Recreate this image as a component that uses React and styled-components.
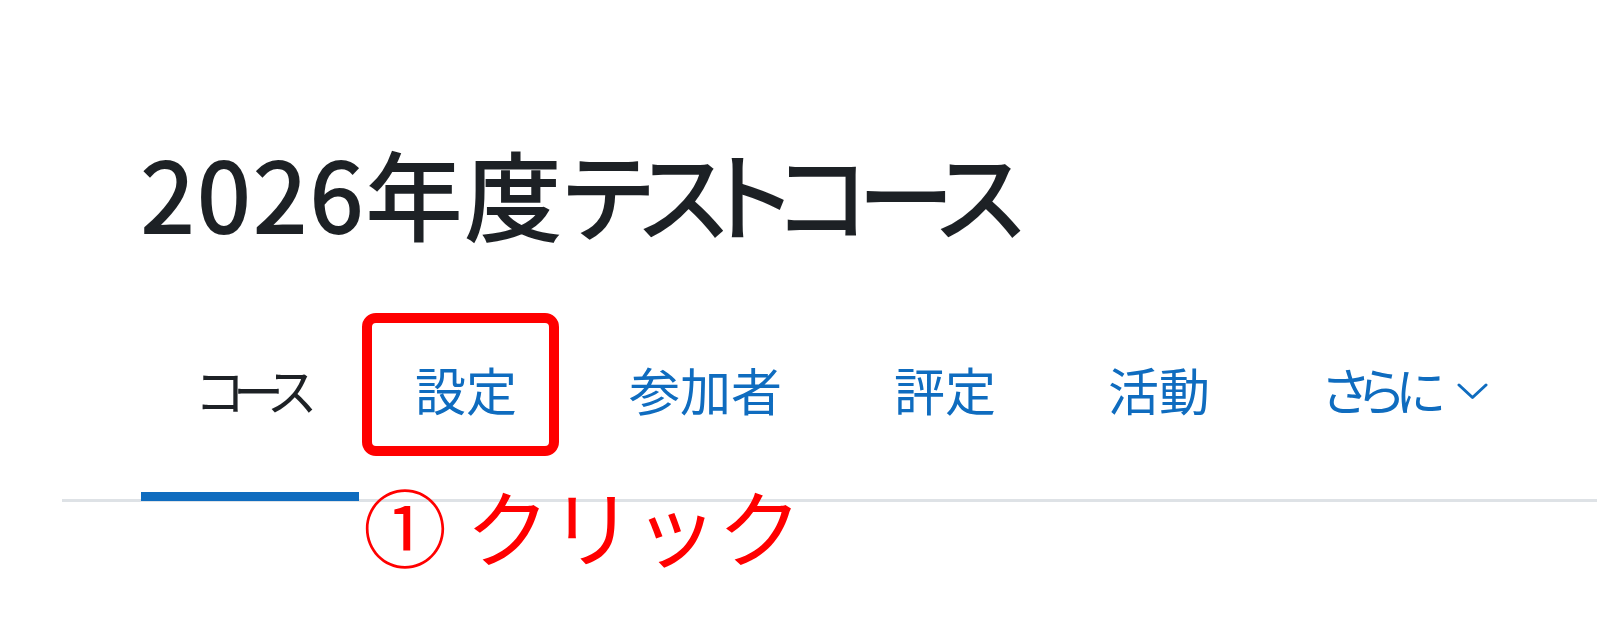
import React from "react"
import styled, { createGlobalStyle } from "styled-components"

// spacing: かなだけのラベルは字間を詰める
const tabs = [
  { label: "コース", active: true, spacing: -12 },
  { label: "設定", marked: true },
  { label: "参加者" },
  { label: "評定" },
  { label: "活動" },
  { label: "さらに", menu: true, spacing: -8 },
]

const App = () => {
  return (
    <>
      <GlobalStyle />
      <Page>
        <PageHeader>
          <CourseTitle>
            2026年度<TitleKana>テストコース</TitleKana>
          </CourseTitle>
        </PageHeader>
        <SecondaryNav>
          <TabList>
            {tabs.map((tab) => (
              <Tab key={tab.label} $active={tab.active}>
                <TabLabel $active={tab.active} $spacing={tab.spacing || 0}>
                  {tab.label}
                  {tab.menu && <Chevron />}
                </TabLabel>
                {tab.marked && (
                  <>
                    <MarkBox />
                    <StepNote>① クリック</StepNote>
                  </>
                )}
              </Tab>
            ))}
          </TabList>
        </SecondaryNav>
      </Page>
    </>
  )
}

export default App

// 下向きの矢印（「さらに」メニュー用）
const Chevron = () => (
  <ChevronIcon viewBox="0 0 31 17" fill="none">
    <polyline
      points="2,2 15.5,14.5 29,2"
      stroke="currentColor"
      strokeWidth="3"
      strokeLinecap="round"
      strokeLinejoin="round"
    />
  </ChevronIcon>
)

// --- Styled Components ---

const GlobalStyle = createGlobalStyle`
  html, body {
    margin: 0;
    padding: 0;
    background: #ffffff;
  }
  body {
    font-family: "Noto Sans CJK JP", "Noto Sans", sans-serif;
    color: #1d2125;
  }
`

const Page = styled.div`
  width: 1597px;
  height: 634px;
  padding: 134px 0 0 62px;
  box-sizing: border-box;
  overflow: hidden;
`

const PageHeader = styled.header`
  padding-left: 79px;
  margin-bottom: 103px;
`

const CourseTitle = styled.h1`
  margin: 0;
  font-size: 96px;
  line-height: 115px;
  font-weight: 400;
  letter-spacing: 3px;
  color: #1d2125;
  -webkit-text-stroke: 2px #1d2125;
  font-feature-settings: "palt";
  white-space: nowrap;
`

// カタカナ部分は詰め気味に組む
const TitleKana = styled.span`
  letter-spacing: -11px;
`

const SecondaryNav = styled.nav`
  border-bottom: 3px solid #dee2e6;
`

const TabList = styled.ul`
  display: flex;
  margin: 0 0 -2px;
  padding: 0 0 0 79px;
  list-style: none;
`

const Tab = styled.li`
  position: relative;
  padding: 0 56px 65px;
  border-bottom: 9px solid ${(props) => (props.$active ? "#0f6cbf" : "transparent")};
`

const TabLabel = styled.span`
  display: flex;
  align-items: center;
  font-size: 51px;
  line-height: 75px;
  font-weight: 400;
  letter-spacing: ${(props) => props.$spacing}px;
  font-feature-settings: "palt";
  white-space: nowrap;
  color: ${(props) => (props.$active ? "#1d2125" : "#0f6cbf")};
`

const ChevronIcon = styled.svg`
  width: 31px;
  height: 17px;
  margin-left: 20px;
  margin-top: 4px;
`

const MarkBox = styled.div`
  position: absolute;
  top: -39px;
  left: 3px;
  width: 197px;
  height: 143px;
  box-sizing: border-box;
  border: 10px solid #ff0000;
  border-radius: 14px;
`

const StepNote = styled.div`
  position: absolute;
  top: 131px;
  left: 4px;
  font-size: 84px;
  line-height: 84px;
  font-weight: 400;
  color: #ff0000;
  white-space: nowrap;
`
